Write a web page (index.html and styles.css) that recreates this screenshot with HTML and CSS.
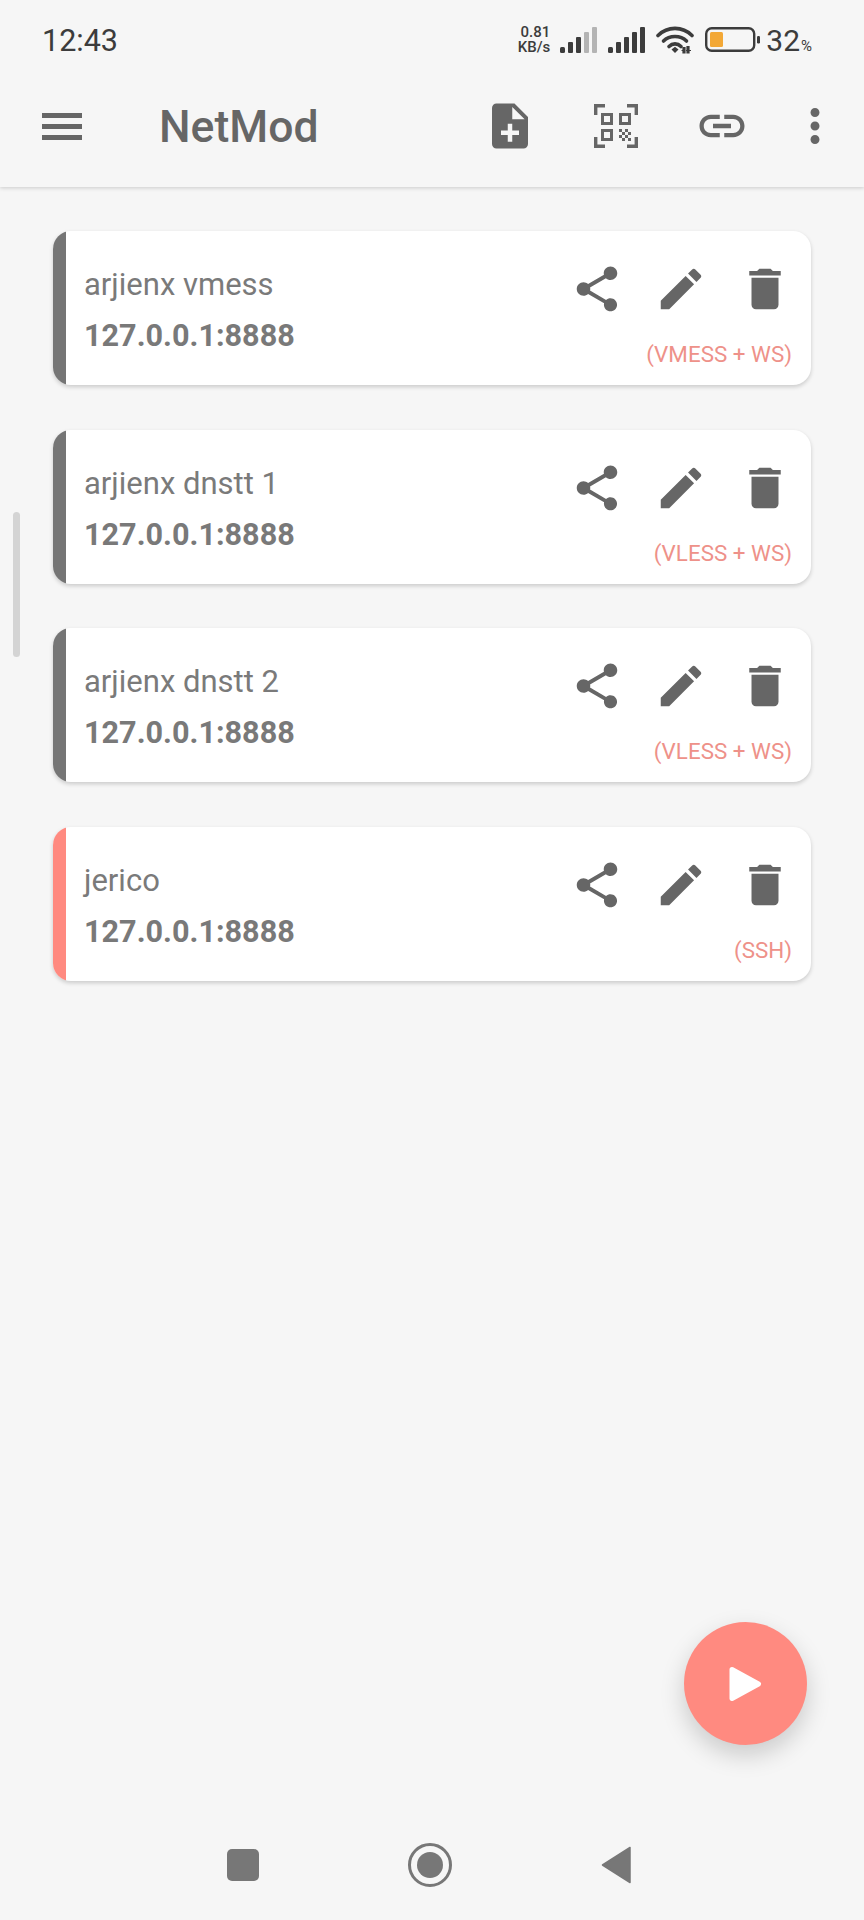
FILE: index.html
```html
<!DOCTYPE html>
<html lang="en">
<head>
    <meta charset="UTF-8">
    <meta name="viewport" content="width=device-width, initial-scale=1.0">
    <title>NetMod</title>
    <link rel="stylesheet" href="styles.css">
</head>
<body>
<div class="screen">
    <!-- status bar -->
    <div class="status-bar">
        <span class="clock">12:43</span>
        <div class="status-right">
            <div class="net-speed"><span>0.81</span><span>KB/s</span></div>
            <svg class="signal" viewBox="0 0 38 26" width="38" height="26">
                <rect x="0" y="20" width="5" height="6" rx="1.5" fill="#3c3c3c"/>
                <rect x="8" y="15" width="5" height="11" rx="1" fill="#3c3c3c"/>
                <rect x="16" y="10" width="5" height="16" rx="1" fill="#3c3c3c"/>
                <rect x="24" y="5" width="5" height="21" rx="1" fill="#b4b4b4"/>
                <rect x="32" y="0" width="5" height="26" rx="1" fill="#b4b4b4"/>
            </svg>
            <svg class="signal" viewBox="0 0 38 26" width="38" height="26">
                <rect x="0" y="20" width="5" height="6" rx="1.5" fill="#3c3c3c"/>
                <rect x="8" y="15" width="5" height="11" rx="1" fill="#3c3c3c"/>
                <rect x="16" y="10" width="5" height="16" rx="1" fill="#3c3c3c"/>
                <rect x="24" y="5" width="5" height="21" rx="1" fill="#3c3c3c"/>
                <rect x="32" y="0" width="5" height="26" rx="1" fill="#3c3c3c"/>
            </svg>
            <svg class="wifi" viewBox="0 0 38 28" width="38" height="28">
                <path d="M2 9.500C11.500 0 26.500 0 36 9.500" fill="none" stroke="#3c3c3c" stroke-width="3.600" stroke-linecap="round"/>
                <path d="M7.500 15C13.500 9 24.500 9 30.500 15" fill="none" stroke="#3c3c3c" stroke-width="3.600" stroke-linecap="round"/>
                <path d="M13 20.500C16.500 17 21.500 17 25 20.500" fill="none" stroke="#3c3c3c" stroke-width="3.600" stroke-linecap="round"/>
                <path d="M15.500 23.500L19 20.800L22.500 23.500L19 27Z" fill="#3c3c3c"/>
                <path d="M27 27V21.500H29V27ZM31 27V20.500H33V27ZM25.500 24.500H28M30 24.500H35" stroke="#3c3c3c" stroke-width="1.200" fill="#3c3c3c"/>
            </svg>
            <svg class="battery" viewBox="0 0 55 26" width="55" height="26">
                <rect x="1.200" y="1.200" width="48" height="22.600" rx="5.500" fill="none" stroke="#3c3c3c" stroke-width="2.400"/>
                <rect x="5" y="5" width="13" height="15" rx="1.500" fill="#f3a836"/>
                <rect x="52" y="9" width="3" height="7.500" rx="1.200" fill="#3c3c3c"/>
            </svg>
            <span class="battery-level">32<small>%</small></span>
        </div>
    </div>

    <!-- toolbar -->
    <div class="toolbar">
        <div class="menu-btn"><span></span><span></span><span></span></div>
        <h1>NetMod</h1>
        <div class="toolbar-actions">
            <svg class="icon" viewBox="0 0 24 24"><path d="M14 2H6c-1.100 0-1.990.9-1.990 2L4 20c0 1.100.89 2 1.990 2H18c1.100 0 2-.9 2-2V8l-6-6zm2 14h-3v3h-2v-3H8v-2h3v-3h2v3h3v2zm-3-7V3.500L18.500 9H13z"/></svg>
            <svg class="icon" viewBox="0 0 54 54">
                <path d="M16 6.700H6.700V16M38 6.700H47.300V16M6.700 38V47.300H16M47.300 38V47.300H38" fill="none" stroke="#666" stroke-width="3.400"/>
                <rect x="13.500" y="15.500" width="9" height="9" fill="none" stroke="#666" stroke-width="3"/>
                <rect x="31.500" y="15.500" width="9" height="9" fill="none" stroke="#666" stroke-width="3"/>
                <rect x="13.500" y="31.500" width="9" height="9" fill="none" stroke="#666" stroke-width="3"/>
                <path d="M30 30h3v3h-3zM36 30h3v3h-3zM33 33h3v3h-3zM39 33h3v3h-3zM30 36h3v3h-3zM36 36h3v3h-3zM33 39h3v3h-3zM39 39h3v3h-3z"/>
            </svg>
            <svg class="icon" viewBox="0 0 24 24"><path d="M3.900 12c0-1.710 1.390-3.100 3.100-3.100h4V7H7c-2.760 0-5 2.240-5 5s2.240 5 5 5h4v-1.900H7c-1.710 0-3.100-1.390-3.100-3.100zM8 13h8v-2H8v2zm9-6h-4v1.900h4c1.710 0 3.100 1.390 3.100 3.100s-1.390 3.100-3.100 3.100h-4V17h4c2.760 0 5-2.240 5-5s-2.240-5-5-5z"/></svg>
            <svg class="icon more" viewBox="0 0 24 24"><path d="M12 8c1.100 0 2-.9 2-2s-.9-2-2-2-2 .9-2 2 .9 2 2 2zm0 2c-1.100 0-2 .9-2 2s.9 2 2 2 2-.9 2-2-.9-2-2-2zm0 6c-1.100 0-2 .9-2 2s.9 2 2 2 2-.9 2-2-.9-2-2-2z"/></svg>
        </div>
    </div>

    <!-- config list -->
    <div class="list">
        <div class="scroll-thumb"></div>

        <div class="card">
            <div class="card-bar"></div>
            <div class="card-info">
                <div class="card-name">arjienx vmess</div>
                <div class="card-addr">127.0.0.1:8888</div>
            </div>
            <div class="card-side">
                <div class="card-actions">
                    <svg class="icon" viewBox="0 0 24 24"><use href="#i-share"/></svg>
                    <svg class="icon" viewBox="0 0 24 24"><use href="#i-edit"/></svg>
                    <svg class="icon" viewBox="0 0 24 24"><use href="#i-delete"/></svg>
                </div>
                <div class="card-type">(VMESS + WS)</div>
            </div>
        </div>

        <div class="card">
            <div class="card-bar"></div>
            <div class="card-info">
                <div class="card-name">arjienx dnstt 1</div>
                <div class="card-addr">127.0.0.1:8888</div>
            </div>
            <div class="card-side">
                <div class="card-actions">
                    <svg class="icon" viewBox="0 0 24 24"><use href="#i-share"/></svg>
                    <svg class="icon" viewBox="0 0 24 24"><use href="#i-edit"/></svg>
                    <svg class="icon" viewBox="0 0 24 24"><use href="#i-delete"/></svg>
                </div>
                <div class="card-type">(VLESS + WS)</div>
            </div>
        </div>

        <div class="card">
            <div class="card-bar"></div>
            <div class="card-info">
                <div class="card-name">arjienx dnstt 2</div>
                <div class="card-addr">127.0.0.1:8888</div>
            </div>
            <div class="card-side">
                <div class="card-actions">
                    <svg class="icon" viewBox="0 0 24 24"><use href="#i-share"/></svg>
                    <svg class="icon" viewBox="0 0 24 24"><use href="#i-edit"/></svg>
                    <svg class="icon" viewBox="0 0 24 24"><use href="#i-delete"/></svg>
                </div>
                <div class="card-type">(VLESS + WS)</div>
            </div>
        </div>

        <div class="card">
            <div class="card-bar active"></div>
            <div class="card-info">
                <div class="card-name">jerico</div>
                <div class="card-addr">127.0.0.1:8888</div>
            </div>
            <div class="card-side">
                <div class="card-actions">
                    <svg class="icon" viewBox="0 0 24 24"><use href="#i-share"/></svg>
                    <svg class="icon" viewBox="0 0 24 24"><use href="#i-edit"/></svg>
                    <svg class="icon" viewBox="0 0 24 24"><use href="#i-delete"/></svg>
                </div>
                <div class="card-type">(SSH)</div>
            </div>
        </div>
    </div>

    <!-- start button -->
    <div class="fab">
        <svg viewBox="0 0 34 36" width="34" height="36"><path d="M3 3.500L29.500 18L3 32.500Z" fill="#fff" stroke="#fff" stroke-width="5" stroke-linejoin="round"/></svg>
    </div>

    <!-- system navigation -->
    <div class="nav-bar">
        <div class="nav-square"></div>
        <div class="nav-home"><div></div></div>
        <svg class="nav-back" viewBox="0 0 30 38" width="30" height="38"><path d="M29 1.500V36.500L1.500 19Z" fill="#777" stroke="#777" stroke-width="1.500" stroke-linejoin="round"/></svg>
    </div>
</div>

<!-- shared icons -->
<svg class="icon-defs" width="0" height="0">
    <defs>
        <path id="i-share" d="M18 16.080c-.76 0-1.440.3-1.960.77L8.910 12.700c.05-.23.09-.46.09-.7s-.04-.47-.09-.7l7.050-4.110c.54.5 1.250.81 2.040.81 1.660 0 3-1.340 3-3s-1.340-3-3-3-3 1.340-3 3c0 .24.04.47.09.7L8.040 9.810C7.500 9.310 6.790 9 6 9c-1.660 0-3 1.340-3 3s1.340 3 3 3c.79 0 1.500-.31 2.040-.81l7.120 4.160c-.05.21-.08.43-.08.65 0 1.610 1.310 2.920 2.920 2.920 1.610 0 2.920-1.310 2.920-2.920s-1.310-2.920-2.920-2.920z"/>
        <path id="i-edit" d="M3 17.250V21h3.750L17.810 9.940l-3.750-3.750L3 17.250zM20.710 7.040c.39-.39.39-1.020 0-1.410l-2.340-2.340c-.39-.39-1.020-.39-1.410 0l-1.830 1.830 3.750 3.750 1.830-1.830z"/>
        <path id="i-delete" d="M6 19c0 1.100.9 2 2 2h8c1.100 0 2-.9 2-2V7H6v12zM19 4h-3.500l-1-1h-5l-1 1H5v2h14V4z"/>
    </defs>
</svg>
</body>
</html>
```

FILE: styles.css
```css
html, body {
    margin: 0;
    padding: 0;
}
body {
    font-family: Roboto, "Liberation Sans", sans-serif;
    background-color: #f6f6f6;
    overflow: hidden;
}
.screen {
    position: relative;
    width: 864px;
    height: 1920px;
    display: flex;
    flex-direction: column;
    background-color: #f6f6f6;
}
.icon-defs {
    position: absolute;
}

/* status bar */
.status-bar {
    position: relative;
    z-index: 1;
    height: 44px;
    padding: 18px 52px 1px 42px;
    display: flex;
    align-items: center;
    justify-content: space-between;
    color: #3c3c3c;
    background-color: #f6f6f6;
}
.clock {
    font-size: 30.5px;
}
.status-right {
    display: flex;
    align-items: center;
}
.net-speed {
    display: flex;
    flex-direction: column;
    align-items: flex-end;
    font-size: 15px;
    line-height: 15px;
    font-weight: 500;
    margin-right: 10px;
}
.signal {
    margin-right: 10px;
}
.wifi {
    margin: 0 11px 0 0;
}
.battery {
    margin-right: 6px;
}
.battery-level {
    font-size: 30px;
}
.battery-level small {
    font-size: 15px;
    margin-left: 1px;
}

/* toolbar */
.toolbar {
    height: 124px;
    padding: 0 22px 0 42px;
    display: flex;
    align-items: center;
    background-color: #f6f6f6;
    box-shadow: 0 1px 4px rgba(0, 0, 0, 0.18);
}
.menu-btn {
    width: 40px;
    margin-top: 2px;
    display: flex;
    flex-direction: column;
    gap: 6px;
}
.menu-btn span {
    display: block;
    height: 5px;
    background-color: #666;
}
.toolbar h1 {
    margin: 3px 0 0 77px;
    font-size: 44.5px;
    font-weight: 500;
    color: #666;
}
.toolbar-actions {
    margin-left: auto;
    margin-top: 2px;
    display: flex;
    gap: 52px;
}
.icon {
    width: 54px;
    height: 54px;
    fill: #666;
    flex: none;
}
.toolbar-actions .more {
    margin-left: -13px;
}

/* config list */
.list {
    position: relative;
    flex: 1;
    padding: 44px 53px 0;
    display: flex;
    flex-direction: column;
    gap: 44.5px;
}
.scroll-thumb {
    position: absolute;
    left: 13px;
    top: 325px;
    width: 7px;
    height: 145px;
    border-radius: 4px;
    background-color: #d4d4d4;
}
.card {
    height: 154px;
    display: flex;
    background: white;
    border-radius: 18px;
    overflow: hidden;
    box-shadow: 0 2px 4px rgba(0, 0, 0, 0.18);
}
.card-bar {
    width: 13px;
    background-color: #757575;
}
.card-bar.active {
    background-color: #ff8a80;
}
.card-info {
    flex: 1;
    padding: 36px 0 0 18px;
}
.card-name {
    font-size: 31px;
    line-height: 36px;
    color: #7a7a7a;
}
.card-addr {
    margin-top: 15px;
    font-size: 30.6px;
    line-height: 36px;
    font-weight: 700;
    color: #797979;
}
.card-side {
    padding: 31px 19px 0 0;
    display: flex;
    flex-direction: column;
    align-items: flex-end;
}
.card-actions {
    display: flex;
    gap: 30px;
}
.card-type {
    margin-top: 25px;
    font-size: 22.4px;
    line-height: 26px;
    color: #ee9189;
}

/* start button */
.fab {
    position: absolute;
    left: 684px;
    top: 1622px;
    width: 123px;
    height: 123px;
    border-radius: 50%;
    background-color: #ff8a80;
    box-shadow: 0 10px 24px rgba(0, 0, 0, 0.18);
    display: flex;
    align-items: center;
    justify-content: center;
}

/* system navigation */
.nav-bar {
    height: 110px;
    padding: 0 233px 0 227px;
    box-sizing: border-box;
    display: flex;
    align-items: center;
    justify-content: space-between;
}
.nav-square {
    width: 32px;
    height: 32px;
    border-radius: 5px;
    background-color: #777;
}
.nav-home {
    width: 38px;
    height: 38px;
    border: 3px solid #777;
    border-radius: 50%;
    display: flex;
    align-items: center;
    justify-content: center;
}
.nav-home div {
    width: 26px;
    height: 26px;
    border-radius: 50%;
    background-color: #777;
}
```
